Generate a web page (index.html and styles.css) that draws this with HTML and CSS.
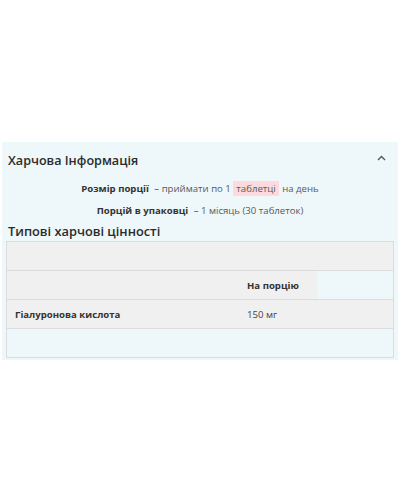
FILE: index.html
```html
<!DOCTYPE html>
<html lang="uk">
<head>
<meta charset="utf-8">
<link rel="stylesheet" href="styles.css">
</head>
<body>
<section class="panel">
  <div class="panel-head">
    <h2 class="panel-title">Харчова Інформація</h2>
    <svg class="caret" width="9" height="6" viewBox="0 0 9 6"><path d="M1 5 L4.5 1.5 L8 5" fill="none" stroke="#555" stroke-width="1.4"/></svg>
  </div>
  <p class="info"><b>Розмір порції</b> <span class="dash">–</span> приймати по 1 <span class="hl">таблетці</span> на день</p>
  <p class="info"><b>Порцій в упаковці</b> <span class="dash">–</span> 1 місяць (30 таблеток)</p>
  <h3 class="sub-title">Типові харчові цінності</h3>
  <div class="table">
    <div class="row gray full"></div>
    <div class="row head">
      <div class="cell c1"></div>
      <div class="cell c2"><b>На порцію</b></div>
    </div>
    <div class="row gray">
      <div class="cell c1"><b>Гіалуронова кислота</b></div>
      <div class="cell c2">150 мг</div>
    </div>
    <div class="row empty"></div>
  </div>
</section>
</body>
</html>
```
FILE: styles.css
```css
html, body {
  margin: 0;
  padding: 0;
  background: #fff;
}
body {
  font-family: "Open Sans", "Noto Sans", sans-serif;
  color: #333;
}
.panel {
  margin: 142px 2px 0;
  background: #eef7f9;
  padding-bottom: 2px;
}
.panel-head {
  height: 36px;
  padding: 2px 12px 0 6px;
  display: flex;
  align-items: center;
  justify-content: space-between;
  box-sizing: border-box;
}
.panel-title {
  margin: 0;
  font-size: 12.6px;
  font-weight: 600;
  color: #2b2b2b;
  line-height: 20px;
}
.caret {
  margin-top: -6px;
}
.info {
  margin: 0;
  text-align: center;
  font-size: 9.6px;
  line-height: 22px;
  color: #5a5a5a;
}
.info b {
  font-weight: 700;
  color: #333;
}
.dash {
  margin: 0 0 0 3px;
  color: #444;
}
.hl {
  background: #fcdadd;
  padding: 1px 3px;
  margin-right: 1px;
}
.sub-title {
  margin: 0;
  padding: 0 6px;
  font-size: 12.8px;
  font-weight: 600;
  line-height: 19px;
  color: #2b2b2b;
}
.table {
  margin: 0 4px;
  border: 1px solid #dcdcdc;
}
.row {
  display: flex;
  height: 28px;
  border-bottom: 1px solid #dcdcdc;
  font-size: 9.6px;
  color: #444;
}
.row:last-child {
  border-bottom: none;
}
.gray {
  background: #f0f0f0;
}
.head .cell {
  background: #f0f0f0;
}
.cell {
  display: flex;
  align-items: center;
  padding: 0 8px;
  box-sizing: border-box;
}
.c1 {
  width: 232px;
}
.c2 {
  width: 78px;
}
.cell b {
  font-weight: 700;
  color: #333;
}
.empty {
  background: #eef7f9;
}
```
